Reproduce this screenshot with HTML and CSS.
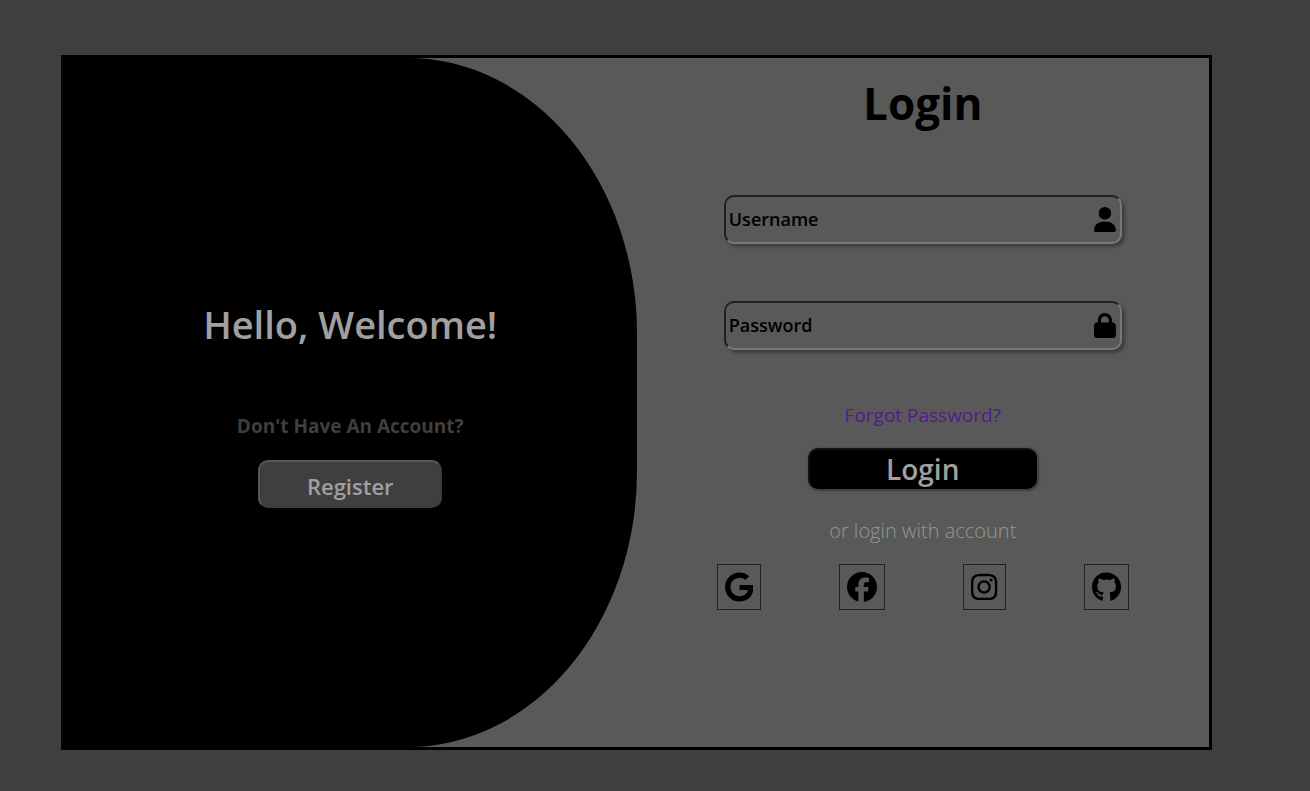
FILE: index.html
```html
<!DOCTYPE html>
<html lang="en">
<head>
<meta charset="utf-8">
<meta name="viewport" content="width=device-width, initial-scale=1">
<title>Login</title>
<link rel="stylesheet" href="styles.css">
</head>
<body>
<main class="card">
  <section class="welcome">
    <h2 class="welcome-title">Hello, Welcome!</h2>
    <p class="welcome-text">Don't Have An Account?</p>
    <button class="register" type="button">Register</button>
  </section>
  <form class="login">
    <h1 class="login-title">Login</h1>
    <div class="field">
      <input class="field-input" type="text" placeholder="Username" aria-label="Username">
      <svg class="field-icon" viewBox="0 0 448 512" aria-hidden="true"><path d="M224 256A128 128 0 1 0 224 0a128 128 0 1 0 0 256zm-45.700 48C79.800 304 0 383.800 0 482.300C0 498.700 13.300 512 29.700 512H418.300c16.400 0 29.700-13.300 29.700-29.700C448 383.800 368.200 304 269.700 304H178.300z"/></svg>
    </div>
    <div class="field">
      <input class="field-input" type="password" placeholder="Password" aria-label="Password">
      <svg class="field-icon" viewBox="0 0 448 512" aria-hidden="true"><path d="M144 144v48H304V144c0-44.200-35.800-80-80-80s-80 35.800-80 80zM80 192V144C80 64.500 144.500 0 224 0s144 64.500 144 144v48h16c35.300 0 64 28.700 64 64V448c0 35.300-28.700 64-64 64H64c-35.300 0-64-28.700-64-64V256c0-35.300 28.700-64 64-64H80z"/></svg>
    </div>
    <a class="forgot" href="#">Forgot Password?</a>
    <button class="submit" type="submit">Login</button>
    <p class="alternative">or login with account</p>
    <nav class="social">
      <a class="social-link" href="#" aria-label="Google"><svg class="social-icon" viewBox="0 0 488 512"><path d="M488 261.800C488 403.300 391.100 504 248 504 110.800 504 0 393.200 0 256S110.800 8 248 8c66.800 0 123 24.500 166.300 64.900l-67.500 64.900C258.500 52.600 94.300 116.600 94.300 256c0 86.500 69.100 156.600 153.700 156.600 98.200 0 135-70.400 140.800-106.900H248v-85.300h236.100c2.300 12.700 3.900 24.900 3.900 41.400z"/></svg></a>
      <a class="social-link" href="#" aria-label="Facebook"><svg class="social-icon" viewBox="0 0 512 512"><path d="M512 256C512 114.600 397.400 0 256 0S0 114.600 0 256C0 376 82.700 476.800 194.200 504.500V334.200H141.400V256h52.800V222.300c0-87.100 39.400-127.500 125-127.500c16.200 0 44.200 3.200 55.700 6.400V172c-6-.6-16.500-1-29.600-1c-42 0-58.200 15.900-58.200 57.200V256h83.600l-14.400 78.200H287V510.100C413.800 494.800 512 386.900 512 256z"/></svg></a>
      <a class="social-link" href="#" aria-label="Instagram"><svg class="social-icon" viewBox="0 0 448 512"><path d="M224.100 141c-63.600 0-114.900 51.300-114.900 114.900s51.300 114.900 114.900 114.900S339 319.500 339 255.900 287.700 141 224.100 141zm0 189.600c-41.100 0-74.700-33.500-74.700-74.700s33.500-74.700 74.700-74.700 74.700 33.500 74.700 74.700-33.600 74.700-74.700 74.700zm146.400-194.300c0 14.900-12 26.800-26.800 26.800-14.900 0-26.800-12-26.800-26.800s12-26.800 26.800-26.800 26.800 12 26.800 26.800zm76.100 27.200c-1.700-35.900-9.900-67.700-36.200-93.900-26.200-26.200-58-34.400-93.900-36.200-37-2.100-147.900-2.100-184.900 0-35.800 1.700-67.600 9.900-93.900 36.100s-34.400 58-36.200 93.900c-2.100 37-2.100 147.900 0 184.900 1.700 35.900 9.900 67.700 36.200 93.900s58 34.400 93.900 36.200c37 2.100 147.900 2.100 184.900 0 35.900-1.700 67.700-9.900 93.900-36.200 26.200-26.200 34.400-58 36.200-93.900 2.100-37 2.100-147.800 0-184.800zM398.800 388c-7.800 19.600-22.900 34.700-42.600 42.600-29.500 11.700-99.500 9-132.100 9s-102.700 2.600-132.100-9c-19.600-7.800-34.700-22.900-42.600-42.600-11.700-29.500-9-99.500-9-132.100s-2.600-102.700 9-132.100c7.800-19.600 22.900-34.700 42.600-42.600 29.500-11.700 99.500-9 132.100-9s102.700-2.600 132.100 9c19.600 7.800 34.700 22.900 42.600 42.600 11.700 29.500 9 99.500 9 132.100s2.700 102.700-9 132.100z"/></svg></a>
      <a class="social-link" href="#" aria-label="GitHub"><svg class="social-icon" viewBox="0 0 496 512"><path d="M165.900 397.400c0 2-2.300 3.600-5.200 3.600-3.300.3-5.600-1.300-5.600-3.600 0-2 2.300-3.600 5.200-3.600 3-.3 5.600 1.300 5.600 3.600zM244.800 8C106.100 8 0 113.300 0 252c0 110.900 69.800 205.800 169.500 239.200 12.800 2.300 17.300-5.600 17.300-12.100 0-6.200-.3-40.400-.3-61.400 0 0-70 15-84.700-29.800 0 0-11.400-29.100-27.800-36.600 0 0-22.900-15.700 1.600-15.400 0 0 24.900 2 38.600 25.800 21.900 38.600 58.600 27.500 72.900 20.900 2.300-16 8.800-27.100 16-33.700-55.900-6.200-112.300-14.300-112.300-110.500 0-27.500 7.600-41.300 23.600-58.900-2.600-6.500-11.100-33.300 2.600-67.900 20.900-6.500 69 27 69 27 20-5.600 41.500-8.500 62.800-8.500s42.800 2.900 62.800 8.500c0 0 48.100-33.600 69-27 13.700 34.700 5.200 61.400 2.600 67.900 16 17.700 25.800 31.500 25.800 58.900 0 96.500-58.900 104.200-114.800 110.500 9.200 7.900 17 22.900 17 46.400 0 33.700-.3 75.400-.3 83.600 0 6.500 4.600 14.400 17.300 12.100C428.200 457.800 496 362.900 496 252 496 113.300 383.500 8 244.800 8z"/></svg></a>
    </nav>
  </form>
</main>
</body>
</html>
```
FILE: styles.css
```css
* { box-sizing: border-box; }

body {
  display: flex;
  min-height: 100vh;
  margin: 0;
  padding: 55px 98px 41px 61px;
  background: #3f3f3f;
  font-family: "Open Sans", "Noto Sans", sans-serif;
  color: #000;
}

h1, h2, p { margin: 0; }

button, input { font-family: inherit; }

.card {
  flex: 1;
  display: grid;
  grid-template-columns: 1fr 1fr;
  border: 3px solid #000;
  background: #595959;
}

.welcome {
  display: flex;
  flex-direction: column;
  align-items: center;
  justify-content: center;
  padding-bottom: 2px;
  border-radius: 0 40% 40% 0;
  background: #000;
}

.welcome-title {
  margin-bottom: 60px;
  font-size: 38px;
  font-weight: 600;
  line-height: 56px;
  color: #a0a0a0;
}

.welcome-text {
  margin-bottom: 20px;
  font-size: 19px;
  font-weight: 700;
  line-height: 28px;
  color: #3f3f3f;
}

.register {
  width: 184px;
  height: 48px;
  padding: 4px 0 0;
  border: 2px solid;
  border-color: #575757 #3c3c3c #3c3c3c #575757;
  border-radius: 10px;
  background: #3f3f3f;
  font-size: 22px;
  font-weight: 600;
  line-height: 32px;
  color: #a0a0a0;
}

.login {
  display: flex;
  flex-direction: column;
  align-items: center;
  padding: 15px 0;
}

.login-title {
  margin-bottom: 62px;
  font-size: 44px;
  font-weight: 700;
  line-height: 60px;
}

.field {
  position: relative;
  width: 100%;
  max-width: 398px;
  margin-bottom: 57px;
}

.field-input {
  display: block;
  width: 100%;
  height: 49px;
  padding: 0 40px 1px 3px;
  border: 2px solid;
  border-color: #202020 #777 #777 #202020;
  border-radius: 10px;
  background: transparent;
  box-shadow: 3px 3px 3px #3f3f3f;
  font-size: 18px;
  font-weight: 600;
  color: #000;
}

.field-input::placeholder {
  color: #000;
  opacity: 1;
}

.field-icon {
  position: absolute;
  top: 12px;
  right: 6px;
  height: 25px;
}

.forgot {
  margin-bottom: 19px;
  font-size: 19px;
  line-height: 28px;
  text-decoration: none;
  color: #551a8b;
}

.field + .forgot { margin-top: -6px; }

.submit {
  width: 40%;
  height: 41px;
  margin-bottom: 28px;
  padding: 0;
  border: 2px solid;
  border-color: #101010 #000 #000 #101010;
  border-radius: 10px;
  background: #000;
  box-shadow: 1px 1px 2px 1px #3f3f3f;
  font-size: 28px;
  font-weight: 600;
  line-height: 36px;
  color: #a0a0a0;
}

.alternative {
  margin-bottom: 19px;
  font-size: 20px;
  font-weight: 300;
  line-height: 28px;
  color: #959595;
}

.social {
  display: flex;
  gap: 78px;
}

.social-link {
  display: flex;
  padding: 7px;
  border: 1px solid #202020;
  color: #000;
}

.social-icon {
  height: 30px;
  fill: currentColor;
}
```
